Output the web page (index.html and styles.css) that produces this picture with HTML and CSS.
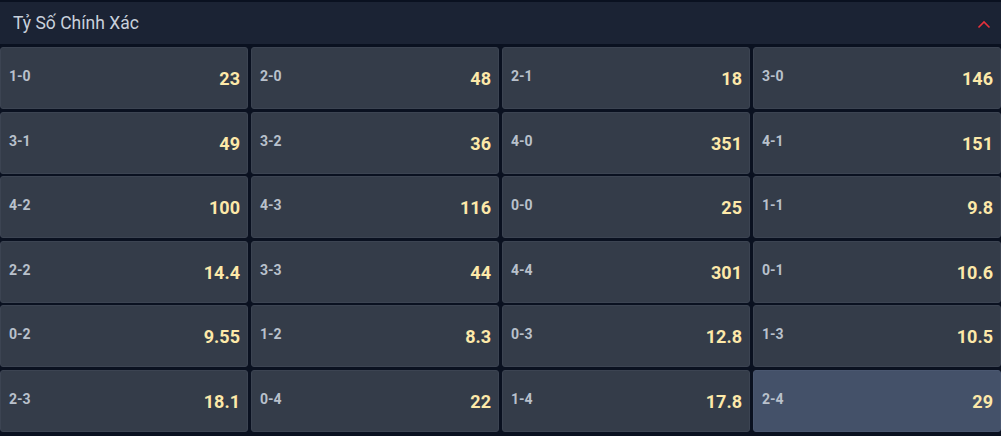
FILE: index.html
```html
<!DOCTYPE html>
<html lang="vi">
<head>
<meta charset="utf-8">
<link rel="stylesheet" href="styles.css">
</head>
<body>
<div class="panel">
  <div class="header">
    <span class="title">Tỷ Số Chính Xác</span>
    <svg class="chev" width="14" height="9" viewBox="0 0 14 9"><path d="M1.5 7.5 L7 2 L12.5 7.5" fill="none" stroke="#e8313b" stroke-width="1.6"/></svg>
  </div>
  <div class="grid">
    <div class="cell"><span class="lbl">1-0</span><span class="odd">23</span></div>
    <div class="cell"><span class="lbl">2-0</span><span class="odd">48</span></div>
    <div class="cell"><span class="lbl">2-1</span><span class="odd">18</span></div>
    <div class="cell"><span class="lbl">3-0</span><span class="odd">146</span></div>
    <div class="cell"><span class="lbl">3-1</span><span class="odd">49</span></div>
    <div class="cell"><span class="lbl">3-2</span><span class="odd">36</span></div>
    <div class="cell"><span class="lbl">4-0</span><span class="odd">351</span></div>
    <div class="cell"><span class="lbl">4-1</span><span class="odd">151</span></div>
    <div class="cell"><span class="lbl">4-2</span><span class="odd">100</span></div>
    <div class="cell"><span class="lbl">4-3</span><span class="odd">116</span></div>
    <div class="cell"><span class="lbl">0-0</span><span class="odd">25</span></div>
    <div class="cell"><span class="lbl">1-1</span><span class="odd">9.8</span></div>
    <div class="cell"><span class="lbl">2-2</span><span class="odd">14.4</span></div>
    <div class="cell"><span class="lbl">3-3</span><span class="odd">44</span></div>
    <div class="cell"><span class="lbl">4-4</span><span class="odd">301</span></div>
    <div class="cell"><span class="lbl">0-1</span><span class="odd">10.6</span></div>
    <div class="cell"><span class="lbl">0-2</span><span class="odd">9.55</span></div>
    <div class="cell"><span class="lbl">1-2</span><span class="odd">8.3</span></div>
    <div class="cell"><span class="lbl">0-3</span><span class="odd">12.8</span></div>
    <div class="cell"><span class="lbl">1-3</span><span class="odd">10.5</span></div>
    <div class="cell"><span class="lbl">2-3</span><span class="odd">18.1</span></div>
    <div class="cell"><span class="lbl">0-4</span><span class="odd">22</span></div>
    <div class="cell"><span class="lbl">1-4</span><span class="odd">17.8</span></div>
    <div class="cell active"><span class="lbl">2-4</span><span class="odd">29</span></div>
  </div>
</div>
</body>
</html>
```
FILE: styles.css
```css
* { box-sizing: border-box; }
html, body { margin: 0; padding: 0; }
body {
  background: #0a1120;
  font-family: Roboto, "Liberation Sans", Arial, sans-serif;
  width: 1001px;
  height: 436px;
  overflow: hidden;
}
.panel {
  padding-top: 2px;
  background: #0a1120;
}
.header {
  height: 42px;
  background: #1b2334;
  display: flex;
  align-items: center;
  justify-content: space-between;
  padding: 0 10px 0 13px;
}
.title {
  color: #c9d1dc;
  font-size: 17.5px;
  font-weight: 400;
}
.chev { display: block; margin-top: 2px; }
.grid {
  margin-top: 3px;
  display: grid;
  grid-template-columns: repeat(4, 248px);
  grid-auto-rows: 62px;
  gap: 2.6px 3px;
}
.cell {
  background: #343c49;
  border: 1px solid #3c4452;
  border-radius: 3px;
  display: flex;
  align-items: center;
  justify-content: space-between;
  padding: 0 7px 0 8px;
}
.cell.active { background: #445169; border-color: #4a5770; }
.lbl {
  color: #b9c1cc;
  font-size: 14px;
  font-weight: 700;
  margin-bottom: 4px;
}
.odd {
  color: #fde9a9;
  font-size: 18px;
  font-weight: 700;
  margin-top: 1px;
}
```
